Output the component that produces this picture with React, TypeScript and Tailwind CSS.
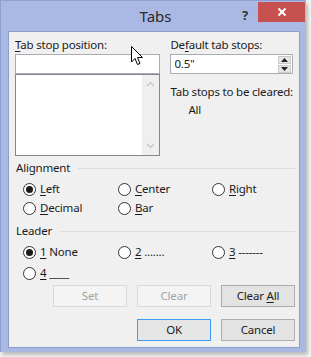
import React from "react";

const font = { fontFamily: '"Noto Sans", "Open Sans", sans-serif', letterSpacing: "-0.2px" };

const U = ({ children }: { children: React.ReactNode }) => <span className="underline underline-offset-[2px]">{children}</span>;

const Radio = ({ checked, children }: { checked?: boolean; children: React.ReactNode }) => (
  <div className="flex items-center h-[16px]">
    <span className="w-[13px] h-[13px] rounded-full border border-[#333] bg-white flex items-center justify-center shrink-0">
      {checked && <span className="w-[7px] h-[7px] rounded-full bg-[#1a1a1a]" />}
    </span>
    <span className="ml-[4px] whitespace-nowrap">{children}</span>
  </div>
);

const GroupLabel = ({ children }: { children: React.ReactNode }) => (
  <div className="flex items-center h-[16px] pr-[4px]">
    <span className="pl-[7px] whitespace-nowrap">{children}</span>
    <div className="flex-1 h-px bg-[#dcdcdc] ml-[8px] mt-[1px]" />
  </div>
);

const Btn = ({ children, disabled, def }: { children: React.ReactNode; disabled?: boolean; def?: boolean }) => (
  <div
    className={
      "w-[74px] h-[22px] flex items-center justify-center border " +
      (disabled
        ? "bg-[#f4f4f4] border-[#d9d9d9] text-[#a3a3a3]"
        : def
        ? "bg-[#e5e5e5] border-[#3c9bf0]"
        : "bg-[#e3e3e3] border-[#adadad]")
    }
  >
    <span className="whitespace-pre">{children}</span>
  </div>
);

export default function App() {
  return (
    <div className="w-[311px] h-[357px] bg-[#f7f7f7] relative overflow-hidden text-[11.5px] text-[#1b1b1b]" style={font}>
      <div className="w-[306px] h-[352px] bg-[#aab9e4] border-l border-t border-[#8f9fd0] shadow-[2px_3px_4px_rgba(0,0,0,0.25)] flex flex-col">
        {/* title bar */}
        <div className="h-[30px] relative flex items-center justify-center shrink-0">
          <span className="text-[15px] text-[#2b2b2b] pl-[4px] pt-[1px] tracking-normal">Tabs</span>
          <span className="absolute left-[241px] top-[5px] text-[13px] font-bold text-[#333]">?</span>
          <div className="absolute left-[257px] top-[1px] w-[47px] h-[20px] bg-[#c75050] flex items-center justify-center">
            <svg width="10" height="10" viewBox="0 0 10 10">
              <path d="M1.5 1.5 L8.5 8.5 M8.5 1.5 L1.5 8.5" stroke="white" strokeWidth="2" />
            </svg>
          </div>
        </div>

        {/* client */}
        <div className="ml-[7px] w-[292px] h-[317px] bg-[#f0f0f0] border border-[#8e9dcc] flex flex-col relative">
          <div className="flex px-[6px] pt-[5px]">
            <div className="w-[150px] flex flex-col">
              <div className="h-[16px] leading-[16px]"><U>T</U>ab stop position:</div>
              <div className="mt-[1px] h-[20px] bg-white border border-[#abadb3]" />
              <div className="h-[82px] bg-white border border-[#828790] flex justify-end">
                <div className="w-[17px] bg-[#efefef] flex flex-col items-center justify-between py-[6px]">
                  <svg width="9" height="6" viewBox="0 0 9 6"><path d="M1 5 L4.5 1.5 L8 5" stroke="#c8c8c8" strokeWidth="1.4" fill="none" /></svg>
                  <svg width="9" height="6" viewBox="0 0 9 6"><path d="M1 1 L4.5 4.5 L8 1" stroke="#c8c8c8" strokeWidth="1.4" fill="none" /></svg>
                </div>
              </div>
            </div>
            <div className="ml-[10px] w-[123px] flex flex-col">
              <div className="h-[16px] leading-[16px]">De<U>f</U>ault tab stops:</div>
              <div className="mt-[1px] h-[20px] bg-white border border-[#abadb3] flex items-center">
                <span className="pl-[3px] flex-1">0.5"</span>
                <div className="w-[13px] h-[17px] mr-[1px] flex flex-col gap-[1px]">
                  <div className="flex-1 bg-[#e6e6e6] border border-[#c9c9c9] flex items-center justify-center">
                    <svg width="7" height="4" viewBox="0 0 7 4"><path d="M0 4 L3.5 0 L7 4 Z" fill="#222" /></svg>
                  </div>
                  <div className="flex-1 bg-[#e6e6e6] border border-[#c9c9c9] flex items-center justify-center">
                    <svg width="7" height="4" viewBox="0 0 7 4"><path d="M0 0 L3.5 4 L7 0 Z" fill="#222" /></svg>
                  </div>
                </div>
              </div>
              <div className="mt-[10px] h-[16px] leading-[16px] whitespace-nowrap">Tab stops to be cleared:</div>
              <div className="mt-[2px] h-[16px] leading-[16px] pl-[18px]">All</div>
            </div>
          </div>

          <div className="mt-[4px]">
            <GroupLabel>Alignment</GroupLabel>
          </div>
          <div className="grid grid-cols-[95px_94px_1fr] pl-[14px] mt-[5px] gap-y-[3px]">
            <Radio checked><U>L</U>eft</Radio>
            <Radio><U>C</U>enter</Radio>
            <Radio><U>R</U>ight</Radio>
            <Radio><U>D</U>ecimal</Radio>
            <Radio><U>B</U>ar</Radio>
          </div>

          <div className="mt-[7px]">
            <GroupLabel>Leader</GroupLabel>
          </div>
          <div className="grid grid-cols-[95px_94px_1fr] pl-[14px] mt-[5px] gap-y-[5px]">
            <Radio checked><U>1</U> None</Radio>
            <Radio><U>2</U> .......</Radio>
            <Radio><U>3</U> -------</Radio>
            <Radio><U>4</U> ____</Radio>
          </div>

          <div className="flex justify-end gap-[10px] pr-[4px] mt-[4px]">
            <Btn disabled>Set</Btn>
            <Btn disabled>Clear</Btn>
            <Btn>Clear <U>A</U>ll</Btn>
          </div>
          <div className="flex justify-end gap-[10px] pr-[4px] mt-[12px]">
            <Btn def>OK</Btn>
            <Btn>Cancel</Btn>
          </div>
        </div>
      </div>

      {/* mouse pointer */}
      <svg className="absolute left-[131px] top-[46px]" width="13" height="20" viewBox="0 0 13 20">
        <path d="M0.5 0.5 L0.5 16 L4 12.5 L6.5 18.5 L9 17.5 L6.5 11.5 L11.5 11.5 Z" fill="white" stroke="black" strokeWidth="1" strokeLinejoin="round" />
      </svg>
    </div>
  );
}
